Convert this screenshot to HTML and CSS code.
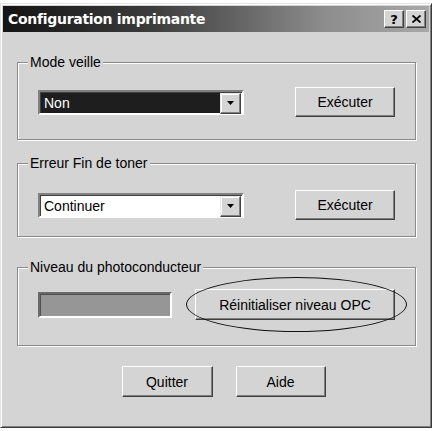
FILE: index.html
```html
<!DOCTYPE html>
<html lang="fr">
<head>
<meta charset="utf-8">
<title>Configuration imprimante</title>
<link rel="stylesheet" href="styles.css">
</head>
<body>
<div class="window">
  <div class="titlebar">
    <span class="title">Configuration imprimante</span>
    <div class="tb-buttons">
      <span class="tb-btn help">?</span>
      <span class="tb-btn close"><svg width="9" height="8" viewBox="0 0 9 8"><path d="M0.5 0.5 L8.5 7.5 M8.5 0.5 L0.5 7.5" stroke="#000" stroke-width="1.8" fill="none"/></svg></span>
    </div>
  </div>
  <div class="content">
    <fieldset class="group g1">
      <legend>Mode veille</legend>
      <div class="row">
        <div class="combo">
          <span class="combo-value selected">Non</span>
          <span class="combo-arrow"><svg width="7" height="4" viewBox="0 0 7 4"><path d="M0 0 H7 L3.5 4 Z" fill="#000"/></svg></span>
        </div>
        <span class="btn btn-exec">Exécuter</span>
      </div>
    </fieldset>
    <fieldset class="group g2">
      <legend>Erreur Fin de toner</legend>
      <div class="row">
        <div class="combo">
          <span class="combo-value">Continuer</span>
          <span class="combo-arrow"><svg width="7" height="4" viewBox="0 0 7 4"><path d="M0 0 H7 L3.5 4 Z" fill="#000"/></svg></span>
        </div>
        <span class="btn btn-exec">Exécuter</span>
      </div>
    </fieldset>
    <fieldset class="group g3">
      <legend>Niveau du photoconducteur</legend>
      <div class="row">
        <div class="level"></div>
        <div class="reset-wrap">
          <span class="btn btn-reset">Réinitialiser niveau OPC</span>
          <span class="ellipse"></span>
        </div>
      </div>
    </fieldset>
    <div class="actions">
      <span class="btn btn-quit">Quitter</span>
      <span class="btn btn-help">Aide</span>
    </div>
  </div>
</div>
</body>
</html>
```
FILE: styles.css
```css
html, body {
  margin: 0;
  padding: 0;
  background: #ffffff;
}
body {
  font-family: "Liberation Sans", Arial, sans-serif;
  font-size: 14px;
  color: #000;
}
.window {
  margin-top: 3px;
  width: 432px;
  height: 425px;
  box-sizing: border-box;
  background: #d4d4d4;
  border: 1px solid;
  border-color: #e4e4e4 #3a3a3a #3a3a3a #e4e4e4;
  box-shadow: inset 1px 1px 0 #ffffff, inset -1px -1px 0 #808080;
  padding: 2px;
  display: flex;
  flex-direction: column;
}
.titlebar {
  height: 26px;
  background: linear-gradient(to right, #141414 0%, #3c3c3c 35%, #8c8c8c 75%, #a8a8a8 100%);
  display: flex;
  align-items: center;
  justify-content: space-between;
  padding: 0 3px 0 5px;
}
.title {
  font-family: "DejaVu Sans", Verdana, sans-serif;
  font-weight: bold;
  font-size: 14px;
  color: #fff;
  letter-spacing: -0.3px;
}
.tb-buttons {
  display: flex;
  gap: 2px;
}
.tb-btn {
  width: 20px;
  height: 18px;
  box-sizing: border-box;
  background: #d4d4d4;
  border: 1px solid;
  border-color: #fff #404040 #404040 #fff;
  box-shadow: inset -1px -1px 0 #808080;
  display: flex;
  align-items: center;
  justify-content: center;
}
.help {
  font-family: "DejaVu Sans", Verdana, sans-serif;
  font-weight: bold;
  font-size: 13px;
  line-height: 1;
}
.content {
  flex: 1;
  padding: 22px 13px 0 14px;
  display: flex;
  flex-direction: column;
}
.group {
  margin: 0;
  padding: 17px 0 22px 0;
  border: 1px solid #8a8a8a;
  box-shadow: inset 1px 1px 0 #fff, 1px 1px 0 #fff;
  min-width: 0;
}
.group legend {
  font-size: 14px;
  line-height: 16px;
  padding: 0 2px;
  margin-left: 10px;
  background: #d4d4d4;
}
.g2 {
  margin-top: 15px;
  padding-top: 19px;
  padding-bottom: 16px;
}
.g3 {
  margin-top: 22px;
  padding-top: 14px;
  padding-bottom: 25px;
}
.row {
  display: flex;
  align-items: center;
  justify-content: space-between;
  height: 30px;
  padding: 0 20px;
}
.g3 .row {
  height: 31px;
}
.combo {
  width: 206px;
  height: 25px;
  box-sizing: border-box;
  background: #fff;
  border: 2px solid;
  border-color: #808080 #fff #fff #808080;
  box-shadow: inset 1px 1px 0 #404040;
  display: flex;
  padding: 1px 1px 0 1px;
}
.combo-value {
  flex: 1;
  padding-left: 3px;
  line-height: 21px;
  color: #000;
}
.combo-value.selected {
  background: #1e1e1e;
  color: #fff;
}
.combo-arrow {
  width: 21px;
  height: 21px;
  box-sizing: border-box;
  background: #d4d4d4;
  border: 1px solid;
  border-color: #e8e8e8 #404040 #404040 #e8e8e8;
  box-shadow: inset -1px -1px 0 #808080, inset 1px 1px 0 #fff;
  display: flex;
  align-items: center;
  justify-content: center;
}
.btn {
  box-sizing: border-box;
  background: #d4d4d4;
  border: 1px solid;
  border-color: #fff #404040 #404040 #fff;
  box-shadow: inset -1px -1px 0 #808080;
  display: flex;
  align-items: center;
  justify-content: center;
  font-size: 14px;
}
.btn-exec {
  width: 100px;
  height: 30px;
}
.level {
  width: 134px;
  height: 26px;
  box-sizing: border-box;
  background: #969696;
  border: 2px solid;
  border-color: #6a6a6a #fff #fff #6a6a6a;
  box-shadow: inset 1px 1px 0 #505050;
}
.reset-wrap {
  position: relative;
}
.btn-reset {
  width: 200px;
  height: 31px;
}
.ellipse {
  position: absolute;
  left: -9px;
  top: -12px;
  width: 221px;
  height: 55px;
  box-sizing: border-box;
  border: 1.5px solid #111;
  border-radius: 50%;
}
.actions {
  display: flex;
  justify-content: center;
  gap: 23px;
  margin-top: 20px;
  padding-left: 14px;
}
.btn-quit {
  width: 91px;
  height: 31px;
}
.btn-help {
  width: 90px;
  height: 31px;
}
```
